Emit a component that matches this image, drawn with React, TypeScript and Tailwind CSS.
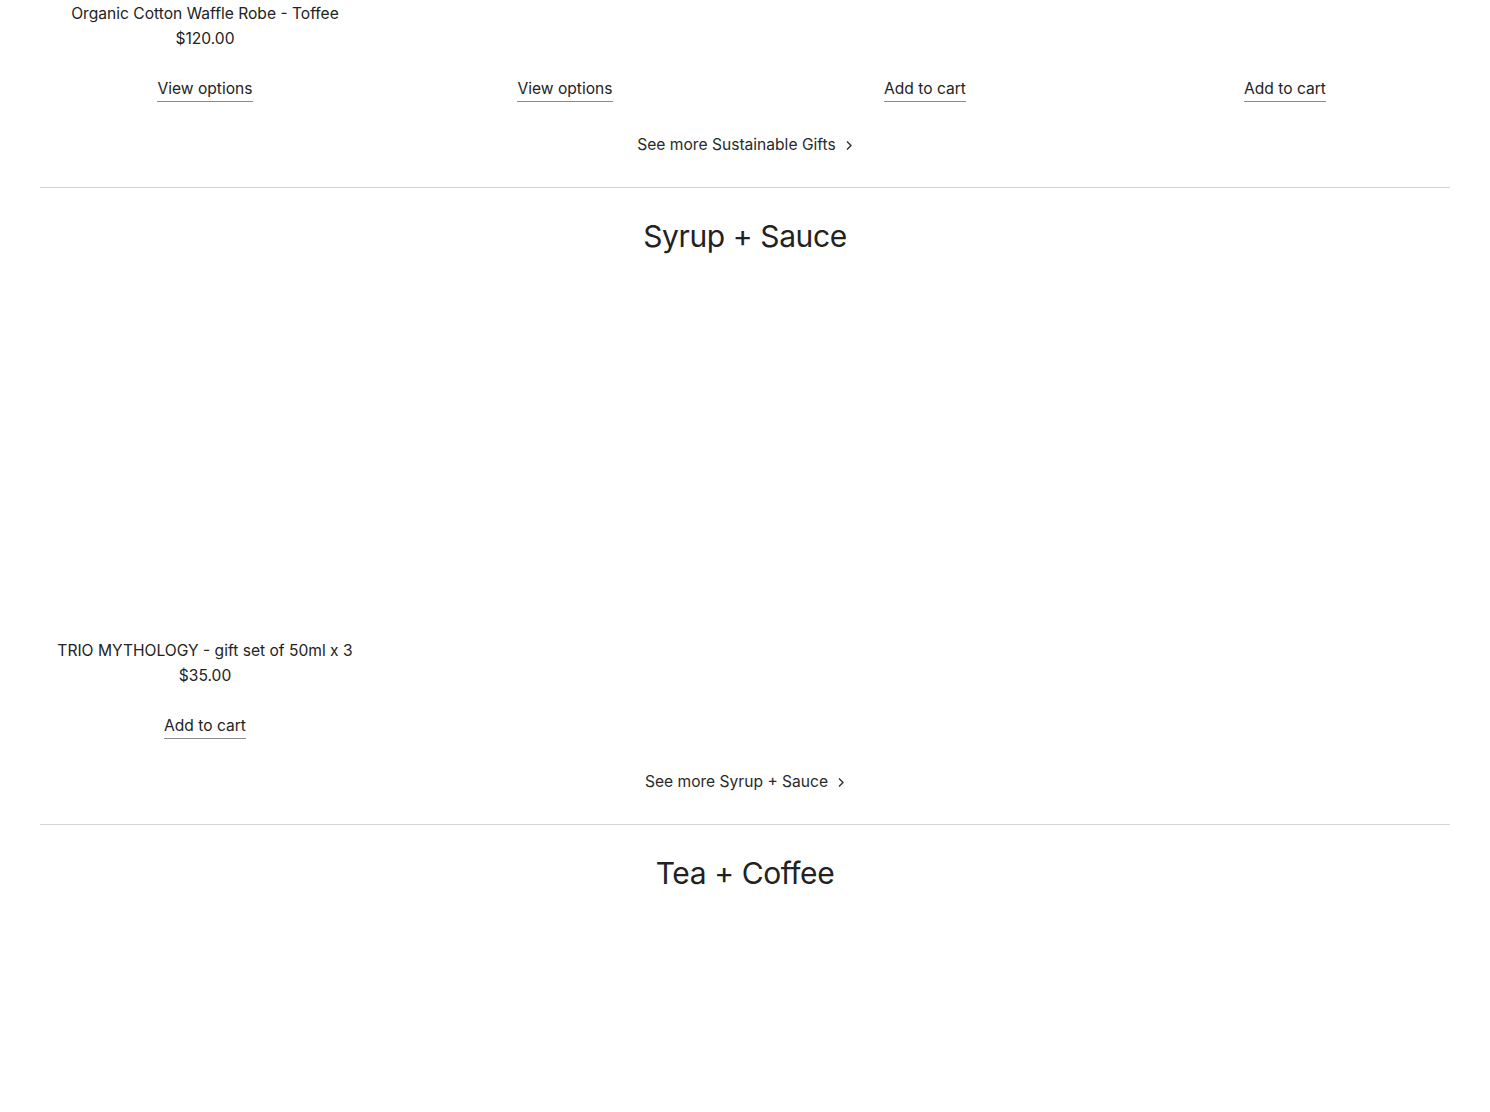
import React from "react";

type P = { title?: string; price?: string; action: string };

const Chevron = () => (
  <svg width="8" height="11" viewBox="0 0 8 11" fill="none" className="ml-[9px]">
    <path d="M2 1.5 L6 5.5 L2 9.5" stroke="#2a2a2a" strokeWidth="1.3" />
  </svg>
);

function Card({ p }: { p: P }) {
  return (
    <div className="flex flex-col items-center">
      <div className="h-6 leading-6 text-[15.6px] text-[#232323]">{p.title ?? ""}</div>
      <div className="mt-[1px] h-6 leading-6 text-[15.6px] text-[#232323]">{p.price ?? ""}</div>
      <div className="mt-[25px]">
        <span className="inline-block leading-6 text-[15.6px] text-[#232323] border-b border-[#8a8a8a]">{p.action}</span>
      </div>
    </div>
  );
}

function SeeMore({ label }: { label: string }) {
  return (
    <div className="mt-[31px] flex justify-center">
      <span className="flex items-center leading-6 text-[15.6px] text-[#2a2a2a]">
        {label}
        <Chevron />
      </span>
    </div>
  );
}

export default function App() {
  const font = { fontFamily: "Inter, 'Liberation Sans', sans-serif" };
  return (
    <div className="bg-white min-h-[1112px] px-10 pt-[2px]" style={font}>
      <div className="grid grid-cols-4 gap-x-[30px]">
        <Card p={{ title: "Organic Cotton Waffle Robe - Toffee", price: "$120.00", action: "View options" }} />
        <Card p={{ action: "View options" }} />
        <Card p={{ action: "Add to cart" }} />
        <Card p={{ action: "Add to cart" }} />
      </div>
      <SeeMore label="See more Sustainable Gifts" />
      <div className="mt-[30px] border-t border-[#d4d4d4]" />
      <h2 className="mt-[28px] text-center text-[30px] leading-10 text-[#222] tracking-[-0.4px]">Syrup + Sauce</h2>
      <div className="mt-[53px] grid grid-cols-4 gap-x-[30px]">
        <div>
          <div className="h-[330px] w-full" />
          <Card p={{ title: "TRIO MYTHOLOGY - gift set of 50ml x 3", price: "$35.00", action: "Add to cart" }} />
        </div>
      </div>
      <SeeMore label="See more Syrup + Sauce" />
      <div className="mt-[30px] border-t border-[#d4d4d4]" />
      <h2 className="mt-[28px] text-center text-[30px] leading-10 text-[#222] tracking-[-0.4px]">Tea + Coffee</h2>
    </div>
  );
}
